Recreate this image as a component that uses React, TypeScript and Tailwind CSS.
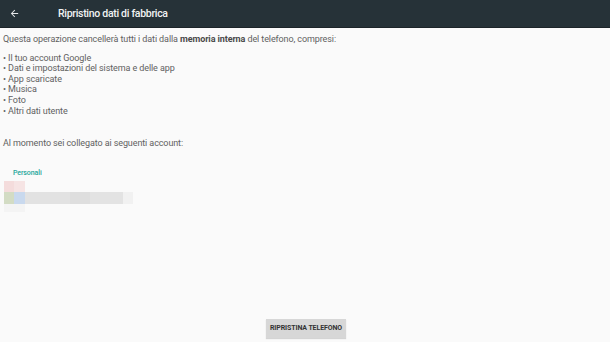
const items = [
  "Il tuo account Google",
  "Dati e impostazioni del sistema e delle app",
  "App scaricate",
  "Musica",
  "Foto",
  "Altri dati utente",
];

const App = () => {
  return (
    <div className="w-[610px] h-[342px] flex flex-col bg-[#fafafa] font-['Roboto',sans-serif] overflow-hidden">
      {/* Toolbar */}
      <div className="h-[28px] shrink-0 flex items-center bg-[#263238] border-b border-[#1c2429]">
        <svg width="11" height="11" viewBox="0 0 24 24" className="ml-[9px]">
          <path d="M20 11H7.83l5.59-5.59L12 4l-8 8 8 8 1.41-1.41L7.83 13H20v-2z" fill="#e6e8e9" />
        </svg>
        <span className="ml-[38px] text-[10.5px] tracking-[-0.3px] text-[#f1f2f3] font-medium">
          Ripristino dati di fabbrica
        </span>
      </div>

      {/* Content */}
      <div className="flex-1 flex flex-col px-[3px] pt-[6px] text-[9px] tracking-[-0.1px] leading-[10.6px] text-[#616161]">
        <p>
          Questa operazione cancellerà tutti i dati dalla{" "}
          <span className="font-bold text-[#4a4a4a]">memoria interna</span> del telefono, compresi:
        </p>
        <ul className="mt-[8px]">
          {items.map((t) => (
            <li key={t}>• {t}</li>
          ))}
        </ul>
        <p className="mt-[22px]">Al momento sei collegato ai seguenti account:</p>

        <span className="mt-[19px] ml-[10px] text-[7px] font-medium text-[#26a69a]">Personali</span>

        {/* Blurred account */}
        <div className="mt-[3px] ml-[1px] flex flex-col">
          <div className="flex">
            <div className="w-[10px] h-[11px] bg-[#f4dcdc]" />
            <div className="w-[11px] h-[11px] bg-[#f6e4e4]" />
          </div>
          <div className="flex h-[12px]">
            <div className="w-[10px] bg-[#d3dcc4]" />
            <div className="w-[11px] bg-[#c9d9ee]" />
            <div className="w-[45px] bg-[#e2e2e2]" />
            <div className="w-[20px] bg-[#dedede]" />
            <div className="w-[33px] bg-[#e3e3e3]" />
            <div className="w-[10px] bg-[#f1f1f1]" />
          </div>
          <div className="flex h-[8px]">
            <div className="w-[21px] bg-[#f4f4f4]" />
          </div>
        </div>

        <div className="mt-auto mb-[4px] flex justify-center">
          <button className="ml-[2px] w-[80px] h-[19px] bg-[#d7d7d7] text-[7px] font-bold text-[#333] shadow-[0_1px_1px_rgba(0,0,0,0.15)]">
            RIPRISTINA TELEFONO
          </button>
        </div>
      </div>
    </div>
  );
};

export default App;
